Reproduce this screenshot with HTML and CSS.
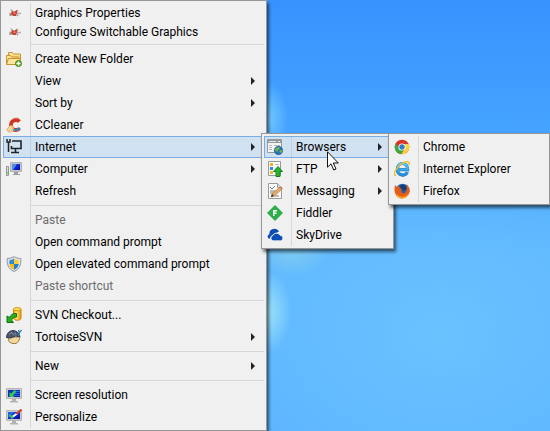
FILE: index.html
```html
<!DOCTYPE html>
<html lang="en">
<head>
<meta charset="utf-8">
<title>Desktop context menu</title>
<link rel="stylesheet" href="styles.css">
</head>
<body>
<svg class="defs" aria-hidden="true">
  <defs>
    <linearGradient id="screen" x2="1" y2="1"><stop offset="0" stop-color="#0639a0"/><stop offset=".5" stop-color="#1228d8"/><stop offset="1" stop-color="#0a0a9c"/></linearGradient>
    <linearGradient id="gold" x2="1"><stop offset="0" stop-color="#f1a911"/><stop offset=".4" stop-color="#ffe268"/><stop offset="1" stop-color="#e49708"/></linearGradient>
    <linearGradient id="folder" y2="1" x2="0"><stop offset="0" stop-color="#ffe9a6"/><stop offset="1" stop-color="#eebc52"/></linearGradient>
    <linearGradient id="ie" y2="1" x2="0"><stop offset="0" stop-color="#65c5f3"/><stop offset="1" stop-color="#238ddb"/></linearGradient>
    <symbol id="i-gfx" viewBox="0 0 16 16"><path d="M3 8.500h12M5 4.500l2 3M12 5l-2 3" stroke="#b0b0b0" stroke-width="1.600"/><path d="M3.500 10.500l3-1.500M12 11l-1-1" stroke="#8c8c8c" stroke-width="1.400"/><path d="M6 6l2 .7 3-1.700 0 3-1 3H7L5 9z" fill="#c8402f"/><path d="M7.500 7.500h2V9h-2z" fill="#f58a70"/></symbol>
    <symbol id="i-folder" viewBox="0 0 16 16"><path d="M2.500 11V1.500h4l1 1.500h7v8" fill="url(#folder)" stroke="#c6942f"/><path d="M.5 13.500V4.500h4l1 1.500h7v2" fill="url(#folder)" stroke="#c6942f"/><path d="M.5 13.500l2-6h12l-2 6z" fill="#ffe3a0" stroke="#c6942f"/><circle cx="12.500" cy="12.500" r="3" fill="#65b32e" stroke="#438719"/><path d="M12.500 10.500v4M10.500 12.500h4" stroke="#fff" stroke-width="1.300"/></symbol>
    <symbol id="i-cc" viewBox="0 0 16 16"><path d="M13.500 4.500A5 5 0 1 0 13.500 11.500" fill="none" stroke="#d0351f" stroke-width="3.800"/><path d="M6.500 2.500a6 6 0 0 1 5-1.300l2 1.500" fill="none" stroke="#f0764f"/><path d="M7 12.300q3.500 2 7-1.300" fill="none" stroke="#358cc4" stroke-width="2"/><path d="M0 13l3-4 3-1 2 3-1 4-4 .8z" fill="#e8bd7e"/><path d="M2 13l3-3M4 14.500l2-4" stroke="#fff0cb"/></symbol>
    <symbol id="i-net" viewBox="0 0 16 16" fill="none" stroke="#222"><path d="M6 2h9v7.500H5.500V7" stroke-width="1.600"/><path d="M9.500 10v3M5 13.500h8" stroke-width="1.600"/><path d="M1 0v3h3V0M2.500 3v10" stroke-width="1.500"/></symbol>
    <symbol id="i-pc" viewBox="0 0 16 16"><path d="M4.500 1.500h11v9h-11z" fill="#c4c7ca" stroke="#b0b3b6"/><path d="M6 3h8v6H6z" fill="url(#screen)"/><path d="M6 3h5L7 9H6z" fill="#4d8de6"/><path d="M8 11h4v2h2v1H7v-1h1z" fill="#9b9fa2"/><path d="M.5 5.500h2v9h-2z" fill="#dadddd" stroke="#909698"/><path d="M0 12h3" stroke="#56bd40"/></symbol>
    <symbol id="i-shield" viewBox="0 0 16 16"><path d="M8 .6Q5 2.500 1.200 2.600C.8 8 2 13 8 15.500 14 13 15.200 8 14.800 2.600 11 2.500 8 .6 8 .6z" fill="#dfe3e5" stroke="#8d979e"/><path d="M8 2.500Q6 4 3.500 4.200L3.300 8H8z" fill="#298bd9"/><path d="M8 2.500q2 1.500 4.500 1.700L12.700 8H8z" fill="#ffce36"/><path d="M8 8H3.300Q3.800 12.200 8 13.700z" fill="#f8bb20"/><path d="M8 8h4.700Q12.200 12.200 8 13.700z" fill="#247fce"/></symbol>
    <symbol id="i-svn" viewBox="0 0 16 16"><path d="M7.500 2v9c0 3 7.500 3 7.500 0V2" fill="url(#gold)" stroke="#c98509"/><ellipse cx="11.200" cy="2.200" rx="3.800" ry="1.600" fill="#ffe05e" stroke="#d1950d"/><path d="M10.500 6.500C7 6 4.700 8 3.500 10.500L1 9v6.500h6.500l-2-2.500C6.500 11 8 10 10.500 10z" fill="#2aae25" stroke="#11700f"/></symbol>
    <symbol id="i-tort" viewBox="0 0 16 16"><path d="M2 8h12l-1.500 4.500L10 14.500H6L3 12.500z" fill="#f0d79c" stroke="#a08048"/><path d="M.5 8.500q.5-6.500 6.500-7 5.500.5 7 6l-4.500-.5-5 2z" fill="#4d586e" stroke="#2c374d"/><path d="M3 5l3-1.500 2 3M9 3.500l1 3" stroke="#8691a5" fill="none"/><path d="M12.500 1l.8 3L15.500 1M13.300 4l-.5 3" fill="none" stroke="#3f86b8" stroke-width="1.400"/></symbol>
    <symbol id="i-mon" viewBox="0 0 16 16"><path d="M.5 1.500h15v10H.5z" fill="#cbcbc9" stroke="#b5b5b3"/><path d="M2 3h12v7H2z" fill="url(#screen)"/><path d="M6 12h4v2h2v1.500H4V14h2z" fill="#b3b3b3"/></symbol>
    <symbol id="i-res" viewBox="0 0 16 16"><use href="#i-mon"/><path d="M7 4.500h7M8 6.500h6M8 8.500h6" stroke="#1c6fd8"/><path d="M8.500 3L5 6.500 3.500 5V10h5L7 8.500l3.500-4z" fill="#38c952"/></symbol>
    <symbol id="i-pers" viewBox="0 0 16 16"><use href="#i-mon"/><path d="M2 3h7L2 9z" fill="#2461e7"/><path d="M3.500 6l2.500 2.500 2-2" stroke="#35ce4d" stroke-width="2" fill="none"/><path d="M7 7.500l4-3" stroke="#fff" stroke-width="2"/><path d="M10.500 5l5-4.500" stroke="#d33b29" stroke-width="2"/></symbol>
    <symbol id="i-web" viewBox="0 0 16 16"><path d="M.5.500h14v13H.5z" fill="#f4f4f3" stroke="#999"/><path d="M1 1h13v3H1z" fill="#939b9f"/><path d="M2 2.500h7M11 2.500h2" stroke="#e5e9eb"/><path d="M2 6.500h3M2 8.500h3M2 10.500h3M7 6.500h6" stroke="#b3b8bb"/><circle cx="11.500" cy="11.500" r="4.200" fill="#2475b8" stroke="#195385" stroke-width=".6"/><path d="M9 9l3-1 1 2-2 1-1 2-2-2zM12 13l1.500-2 2 0-1 3z" fill="#73b54a"/></symbol>
    <symbol id="i-ftp" viewBox="0 0 16 16"><path d="M1.500.500h12v14h-12z" fill="#fbfbfb" stroke="#999"/><path d="M3 2h3v3H3z" fill="#f0ae26"/><path d="M3 6h3v3H3z" fill="#368bd0"/><path d="M3 10h3v3H3z" fill="#e9bd35"/><path d="M8 3.500h4" stroke="#bbb"/><path d="M11 5.500l4.500 5H13v5H9v-5H6.500z" fill="#27b42e" stroke="#168123"/></symbol>
    <symbol id="i-msg" viewBox="0 0 16 16"><path d="M1.500.500h9l4 4v11h-13z" fill="#fafafa" stroke="#999"/><path d="M10.500.500v4h4" fill="#ddd" stroke="#999"/><path d="M3 4l2 2 3-3M3 8h6M3 10h4M8 13h4" fill="none" stroke="#7d7d7d"/><path d="M4 14l1-3 8-7 2 2-8 7.500z" fill="#e7ad68" stroke="#aa733a" stroke-width=".6"/><path d="M4 14l1-3 2 2z" fill="#333"/><path d="M12 4.500L13.500 3 16 5.500l-1.500 1z" fill="#c9836c"/></symbol>
    <symbol id="i-fid" viewBox="0 0 16 16"><path d="M8 0l8 8-8 8-8-8z" fill="#2dae49"/><path d="M6.800 11V5.700h3.200M6.800 8.200h2.800" fill="none" stroke="#fff" stroke-width="1.400"/></symbol>
    <symbol id="i-sky" viewBox="0 0 16 16"><path d="M2.500 12A2.600 2.600 0 0 1 2.500 7 5 4.500 0 0 1 12 4.500L7 7 4 9z" fill="#0b4cb5"/><path d="M6 13.800a2.600 2.600 0 0 1-.4-5A4 3.800 0 0 1 13 8.300a2.800 2.800 0 0 1 .8 5.500z" fill="#0b4cb5" stroke="#f0f0f0" stroke-width=".8"/></symbol>
    <symbol id="i-chrome" viewBox="0 0 16 16"><circle cx="8" cy="8" r="7.300" fill="#da3429"/><path d="M1.700 4.300A7.300 7.300 0 0 0 7.300 15.300L10.500 9.500 5 9.500z" fill="#3caa47"/><path d="M7.300 15.300A7.300 7.300 0 0 0 14.700 5H8l3 4.500z" fill="#fbd239"/><circle cx="8" cy="8" r="3.600" fill="#fff"/><circle cx="8" cy="8" r="2.700" fill="#327cc5"/></symbol>
    <symbol id="i-ie" viewBox="0 0 16 16"><path d="M3.500 8.700h10.200C13.500 0 3.300 1 3.300 8.300c0 6.500 8.200 7.500 10 2.700" fill="none" stroke="#197bbf" stroke-width="3.200"/><path d="M3.500 8.700h10.200C13.500 0 3.300 1 3.300 8.300c0 6.500 8.200 7.500 10 2.700" fill="none" stroke="url(#ie)" stroke-width="2.300"/><path d="M2 14.500C-2 14.500 1.500 6.500 8 2.500c5-3 8-2.200 7 1.500" fill="none" stroke="#f3bd24" stroke-width="1.400"/></symbol>
    <symbol id="i-fox" viewBox="0 0 16 16"><circle cx="8.500" cy="7.200" r="6.500" fill="#2761a8"/><path d="M6 3q2-2 5-1l2 4-3 2-3-2z" fill="#173d76"/><path d="M1 2l2 2 2-1q0 3 3 3l-1 2q1 3 4 2l1-2q2-3 0-7 5 4 3.500 8.500C13.500 17 3 17.500 1 10 .2 7 .5 4 1 2z" fill="#e45a19"/><path d="M2 10q3 4.500 8 3.500 4-1 5-5-1 7-7 7-5 0-6-5.500z" fill="#f8a31c"/></symbol>
  </defs>
</svg>
<main class="desktop">
  <ul class="menu menu-main">
    <li><button class="row compact"><svg class="icon"><use href="#i-gfx"/></svg><span>Graphics Properties</span></button></li>
    <li><button class="row compact"><svg class="icon"><use href="#i-gfx"/></svg><span>Configure Switchable Graphics</span></button></li>
    <li class="separator"></li>
    <li><button class="row"><svg class="icon"><use href="#i-folder"/></svg><span>Create New Folder</span></button></li>
    <li><button class="row more"><span>View</span></button></li>
    <li><button class="row more"><span>Sort by</span></button></li>
    <li><button class="row"><svg class="icon"><use href="#i-cc"/></svg><span>CCleaner</span></button></li>
    <li class="branch">
      <button class="row more active" aria-expanded="true"><svg class="icon"><use href="#i-net"/></svg><span>Internet</span></button>
      <ul class="menu submenu menu-internet">
        <li class="branch">
          <button class="row more active" aria-expanded="true"><svg class="icon"><use href="#i-web"/></svg><span>Browsers</span></button>
          <ul class="menu submenu menu-browsers">
            <li><button class="row"><svg class="icon"><use href="#i-chrome"/></svg><span>Chrome</span></button></li>
            <li><button class="row"><svg class="icon"><use href="#i-ie"/></svg><span>Internet Explorer</span></button></li>
            <li><button class="row"><svg class="icon"><use href="#i-fox"/></svg><span>Firefox</span></button></li>
          </ul>
          <svg class="pointer" viewBox="0 0 12 20" aria-hidden="true"><path d="M.5.800v15.400l3.500-3.400 2.700 6.200 2.300-1-2.700-6h5z" fill="#fff" stroke="#111"/></svg>
        </li>
        <li><button class="row more"><svg class="icon"><use href="#i-ftp"/></svg><span>FTP</span></button></li>
        <li><button class="row more"><svg class="icon"><use href="#i-msg"/></svg><span>Messaging</span></button></li>
        <li><button class="row"><svg class="icon"><use href="#i-fid"/></svg><span>Fiddler</span></button></li>
        <li><button class="row"><svg class="icon"><use href="#i-sky"/></svg><span>SkyDrive</span></button></li>
      </ul>
    </li>
    <li><button class="row more"><svg class="icon"><use href="#i-pc"/></svg><span>Computer</span></button></li>
    <li><button class="row"><span>Refresh</span></button></li>
    <li class="separator"></li>
    <li><button class="row" disabled><span>Paste</span></button></li>
    <li><button class="row"><span>Open command prompt</span></button></li>
    <li><button class="row"><svg class="icon"><use href="#i-shield"/></svg><span>Open elevated command prompt</span></button></li>
    <li><button class="row" disabled><span>Paste shortcut</span></button></li>
    <li class="separator"></li>
    <li><button class="row"><svg class="icon"><use href="#i-svn"/></svg><span>SVN Checkout...</span></button></li>
    <li><button class="row more"><svg class="icon"><use href="#i-tort"/></svg><span>TortoiseSVN</span></button></li>
    <li class="separator"></li>
    <li><button class="row more"><span>New</span></button></li>
    <li class="separator"></li>
    <li><button class="row"><svg class="icon"><use href="#i-res"/></svg><span>Screen resolution</span></button></li>
    <li><button class="row"><svg class="icon"><use href="#i-pers"/></svg><span>Personalize</span></button></li>
  </ul>
</main>
</body>
</html>
```
FILE: styles.css
```css
* { box-sizing: border-box; }

body {
  margin: 0;
  font: 12px/16px Roboto, "Open Sans", sans-serif;
  color: #000;
}

.defs {
  position: absolute;
  width: 0;
  height: 0;
}

.desktop {
  display: flex;
  align-items: flex-start;
  min-height: 100vh;
  background:
    radial-gradient(ellipse 20px 36px at 268px 118px, #74caff, transparent),
    radial-gradient(ellipse 40px 32px at 292px 244px, #86cfee, transparent),
    radial-gradient(ellipse 26px 42px at 266px 312px, #a0e4f8, transparent),
    radial-gradient(ellipse 260px 200px at 80% 78%, #6ac2ff, transparent),
    linear-gradient(#3892ff, #46a4ff 32%, #5fb7ff 60%, #5cb3ff);
}

.menu {
  margin: 0;
  padding: 2px;
  list-style: none;
  border: 1px solid #979797;
  background:
    linear-gradient(#d7d7d7, #d7d7d7) 27px 0 / 1px 100% no-repeat content-box,
    #f0f0f0;
  box-shadow: 2px 3px 3px rgba(0, 0, 0, .55);
}

.menu-main { width: 267px; }
.menu-internet { width: 133px; }
.menu-browsers { width: 162px; }

.branch { position: relative; }

.submenu {
  position: absolute;
  top: -3px;
  left: calc(100% - 3px);
  z-index: 1;
}

.row {
  display: grid;
  grid-template-columns: 16px 1fr 4px;
  column-gap: 13px;
  align-items: center;
  width: 100%;
  height: 22px;
  padding: 0 8px 0 2px;
  border: 1px solid transparent;
  background: none;
  color: inherit;
  font: inherit;
  text-align: left;
  white-space: nowrap;
}

.row span { grid-column: 2; }
.row.compact { height: 19px; }
.row:disabled { color: #6d6d6d; }

.row.active {
  border-color: #78aee5;
  background: rgba(137, 193, 247, .3);
}

.row.more::after {
  content: "";
  grid-column: 3;
  border: 4px solid transparent;
  border-left-color: #222;
  border-right-width: 0;
}

.icon {
  grid-row: 1;
  width: 16px;
  height: 16px;
}

.separator {
  height: 7px;
  margin-left: 28px;
  padding-top: 3px;
}

.separator::before {
  content: "";
  display: block;
  height: 1px;
  background: #d7d7d7;
}

.pointer {
  position: absolute;
  top: 15px;
  left: 63px;
  z-index: 2;
  width: 12px;
  height: 20px;
}
```
